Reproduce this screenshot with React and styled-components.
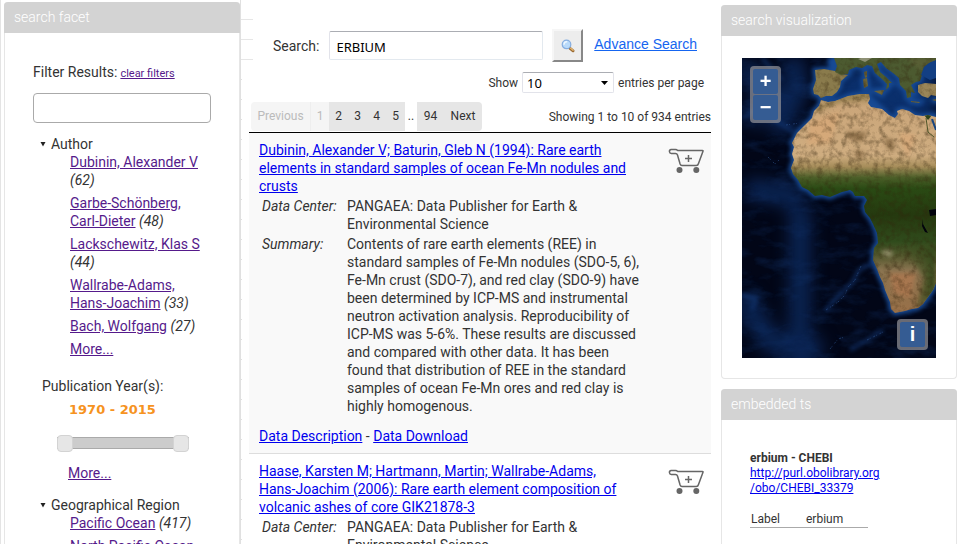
import React, { useState } from "react";
import styled, { createGlobalStyle } from "styled-components";

const GlobalStyle = createGlobalStyle`
  * { box-sizing: border-box; }
  body {
    margin: 0;
    background: #fff;
    color: #333;
    font: 14px/18px Roboto, "Liberation Sans", sans-serif;
  }
  button, input, select { font: inherit; color: inherit; margin: 0; }
`;

const Page = styled.div`
  display: grid;
  grid-template-columns: 236px minmax(0, 1fr) 236px;
  padding: 0 4px 0 3px;
  border-left: 1px solid #e4e4e4;
`;

const SideColumn = styled.aside`
  display: flex;
  flex-direction: column;
  gap: 10px;
  padding-top: ${(p) => p.$top}px;
`;

const PanelBox = styled.section`
  border: 1px solid #e6e6e6;
  border-top: 0;
  border-radius: 4px;
  background: #fff;
`;

const PanelHeader = styled.h2`
  margin: 0 -1px;
  height: 31px;
  padding: 0 10px;
  border-radius: 4px 4px 0 0;
  background: #d3d3d3;
  color: #fff;
  font-size: 14px;
  font-weight: 300;
  line-height: 30px;
`;

const FacetBody = styled.div`
  padding: 30px 28px 20px;
`;

const FilterLine = styled.div`
  display: flex;
  align-items: baseline;
  gap: 3px;
  margin-bottom: 10px;
`;

const Link = styled.a`
  color: ${(p) => (p.$visited ? "#551a8b" : "#0000ee")};
  font-size: ${(p) => p.$size || 14}px;
`;

const FilterInput = styled.input`
  display: block;
  width: 100%;
  height: 30px;
  padding: 0 8px;
  border: 1px solid #aaa;
  border-radius: 4px;
  background: #fff;
`;

const FacetGroup = styled.section`
  padding-left: 7px;
  margin-top: ${(p) => p.$gap}px;
`;

const FacetToggle = styled.button`
  display: flex;
  align-items: center;
  gap: 5px;
  padding: 0;
  border: 0;
  background: none;
`;

const FacetList = styled.ul`
  display: flex;
  flex-direction: column;
  gap: 5px;
  margin: 0;
  padding: 0 0 0 30px;
  list-style: none;
`;

const YearBlock = styled.section`
  padding-left: 9px;
  margin-top: 19px;
`;

const YearRange = styled.output`
  display: block;
  margin: 6px 0 15px 27px;
  color: #f6931f;
  font: bold 13px/18px "DejaVu Sans", sans-serif;
`;

const Slider = styled.div`
  display: grid;
  align-items: center;
  width: 132px;
  height: 18px;
  margin-left: 15px;
  background: linear-gradient(#aaa, #aaa) 0 3px / 100% 1px no-repeat,
    linear-gradient(#aaa, #aaa) 0 14px / 100% 1px no-repeat,
    linear-gradient(#ccc, #ccc) 0 3px / 100% 12px no-repeat;
`;

const Range = styled.input`
  grid-area: 1 / 1;
  appearance: none;
  width: 100%;
  height: 18px;
  background: none;
  pointer-events: none;
  &::-webkit-slider-thumb {
    appearance: none;
    width: 16px;
    height: 17px;
    border: 1px solid #d3d3d3;
    border-radius: 4px;
    background: #e6e6e6;
    pointer-events: auto;
  }
`;

const MoreYears = styled.div`
  margin: 12px 0 0 26px;
`;

const Main = styled.main`
  padding: 29px 10px 0 8px;
  border-left: 1px solid #e0e0e0;
  background: linear-gradient(#e6e6e6, #e6e6e6) 0 19px / 12px 1px no-repeat,
    linear-gradient(#e6e6e6, #e6e6e6) 0 39px / 12px 1px no-repeat,
    linear-gradient(#e6e6e6, #e6e6e6) 0 59px / 12px 1px no-repeat,
    repeating-linear-gradient(transparent 0 19px, #e0e0e0 19px 20px) 0 0 / 1px 100% no-repeat;
`;

const SearchForm = styled.form`
  display: flex;
  align-items: center;
  height: 33px;
  padding: 0 14px 0 24px;
`;

const SearchLabel = styled.label`
  padding-right: 10px;
`;

const SearchInput = styled.input`
  flex: 1;
  min-width: 0;
  height: 29px;
  padding: 2px 6px 0;
  border: 1px solid #e3e9ef;
  border-top-color: #abadb3;
  border-left-color: #e2e3ea;
  border-radius: 2px;
  color: #000;
  background: #fff;
  font: 13px "Noto Sans", sans-serif;
`;

const SearchButton = styled.button`
  display: grid;
  place-items: center;
  width: 31px;
  height: 33px;
  margin: 0 11px 0 9px;
  padding: 0;
  border: 2px solid;
  border-color: #f6f6f6 #888 #888 #f6f6f6;
  background: #ededed;
`;

const AdvanceLink = styled.a`
  padding-bottom: 4px;
  color: #1565f0;
  font: 14px/18px "Liberation Sans", sans-serif;
`;

const LengthRow = styled.div`
  display: flex;
  justify-content: flex-end;
  align-items: center;
  gap: 4px;
  padding: 0 7px 0 0;
  margin-top: 10px;
  height: 21px;
  font-size: 12px;
`;

const LengthSelect = styled.select`
  appearance: none;
  width: 92px;
  height: 21px;
  padding: 0 4px;
  border: 1px solid #e2e3ea;
  border-top-color: #abadb3;
  border-radius: 2px;
  color: #000;
  background: #fff url("data:image/svg+xml,%3Csvg xmlns='http://www.w3.org/2000/svg' width='7' height='4'%3E%3Cpath d='M0 0h7L3.500 4z'/%3E%3C/svg%3E") right 5px center no-repeat;
  font: 13px "Noto Sans", sans-serif;
`;

const PagerRow = styled.div`
  display: flex;
  justify-content: space-between;
  align-items: center;
  margin: 9px 0 1px;
  font-size: 12px;
`;

const Pager = styled.nav`
  display: flex;
  align-items: stretch;
  height: 29px;
  padding-left: 2px;
  line-height: 29px;
`;

const PageButton = styled.button`
  min-width: ${(p) => p.$width}px;
  padding: 0;
  border: 0;
  border-right: ${(p) => (p.$divider ? "1px solid #eee" : "0")};
  border-radius: ${(p) => p.$round || "0"};
  background: #e6e6e6;
  &:disabled {
    background: #f5f5f5;
    color: #bbb;
  }
`;

const PageGap = styled.span`
  width: 12px;
  text-align: center;
`;

const Results = styled.ol`
  margin: 0;
  padding: 0;
  border-top: 1px solid #000;
  list-style: none;
`;

const ResultRow = styled.li`
  display: grid;
  grid-template-columns: minmax(0, 1fr) 36px;
  gap: 24px;
  padding: 8px 7px 8px 10px;
  border-bottom: 1px solid #ddd;
  background: ${(p) => (p.$odd ? "#f9f9f9" : "#fff")};
`;

const ResultTitle = styled.h3`
  margin: 0 14px 2px 0;
  font-size: 14px;
  font-weight: 400;
`;

const Facts = styled.dl`
  display: grid;
  grid-template-columns: 82px minmax(0, 1fr);
  gap: 2px 3px;
  margin: 0 0 12px 3px;
`;

const FactLabel = styled.dt`
  font-style: italic;
`;

const FactValue = styled.dd`
  margin: 0;
`;

const CartButton = styled.button`
  align-self: start;
  width: 36px;
  height: 26px;
  margin-top: 7px;
  padding: 0;
  border: 0;
  background: none;
`;

const MapBody = styled.div`
  padding: 22px 20px 20px;
`;

const MapFrame = styled.div`
  position: relative;
  height: 300px;
`;

const MapSvg = styled.svg`
  display: block;
  width: 100%;
  height: 100%;
`;

const MapControl = styled.div`
  position: absolute;
  ${(p) => (p.$corner === "top" ? "top: 8px; left: 8px;" : "right: 8px; bottom: 8px;")}
  display: grid;
  gap: 1px;
  padding: 3px;
  border-radius: 4px;
  background: rgba(150, 150, 155, 0.7);
`;

const MapButton = styled.button`
  display: grid;
  place-items: center;
  width: 25px;
  height: 25px;
  padding: 0;
  border: 0;
  border-radius: 2px;
  background: #355c93;
  color: #fff;
  font: bold 20px/25px "Liberation Sans", sans-serif;
`;

const TermBody = styled.div`
  padding: 31px 28px;
  font-size: 12px;
  line-height: 15px;
`;

const TermName = styled.strong`
  display: block;
`;

const TermTable = styled.table`
  width: 118px;
  margin-top: 15px;
  border-collapse: collapse;
  th, td {
    padding: 1px 1px 0;
    border-bottom: 1px solid #aaa;
    font-weight: 400;
    text-align: left;
  }
  th { width: 55px; }
`;

function Panel({ title, children }) {
  return (
    <PanelBox>
      <PanelHeader>{title}</PanelHeader>
      {children}
    </PanelBox>
  );
}

function Facet({ name, items, gap, more }) {
  const [open, setOpen] = useState(true);
  return (
    <FacetGroup $gap={gap}>
      <FacetToggle type="button" aria-expanded={open} onClick={() => setOpen(!open)}>
        <svg width="6" height="6" viewBox="0 0 6 6" aria-hidden="true">
          <path d="M.5 1h5L3 5.500z" fill="#222" />
        </svg>
        {name}
      </FacetToggle>
      {open && (
        <FacetList>
          {items.map(([label, count]) => (
            <li key={label}>
              <Link href="#" $visited>{label}</Link> <i>({count})</i>
            </li>
          ))}
          {more && <li><Link href="#" $visited>More...</Link></li>}
        </FacetList>
      )}
    </FacetGroup>
  );
}

function YearSlider() {
  const [from, setFrom] = useState(1970);
  const [to, setTo] = useState(2015);
  return (
    <YearBlock>
      <div>Publication Year(s):</div>
      <YearRange>{from} - {to}</YearRange>
      <Slider>
        <Range type="range" aria-label="From year" min="1970" max="2015" value={from}
          onChange={(e) => setFrom(Math.min(+e.target.value, to))} />
        <Range type="range" aria-label="To year" min="1970" max="2015" value={to}
          onChange={(e) => setTo(Math.max(+e.target.value, from))} />
      </Slider>
      <MoreYears><Link href="#" $visited>More...</Link></MoreYears>
    </YearBlock>
  );
}

function CartIcon() {
  return (
    <svg width="36" height="26" viewBox="0 0 36 26" fill="none" stroke="#666" strokeWidth="1.500" strokeLinejoin="round" aria-hidden="true">
      <path d="M7.500 5.500H3.700A2 2 0 0 1 3.200 1.500h4.300Q9 1.500 9.500 2.500h25q.8 0 .5.800L30.500 15.500Q30 17.500 28.300 17.500H14q-1.400 0-1.900-1.500L9.500 7Q9 5.500 7.500 5.500z" />
      <path d="M20.500 7v7M17 10.500h7" />
      <circle cx="11.500" cy="22" r="3" fill="#666" stroke="none" />
      <circle cx="28.300" cy="22" r="3" fill="#666" stroke="none" />
    </svg>
  );
}

function LensIcon() {
  return (
    <svg width="14" height="14" viewBox="0 0 16 16" aria-hidden="true">
      <path d="M10 10.500l3.800 3" stroke="#9a6a32" strokeWidth="3.200" strokeLinecap="round" />
      <path d="M11 10.500l2.800 2.400" stroke="#e6b870" strokeWidth="1.500" strokeLinecap="round" />
      <circle cx="6.300" cy="6.200" r="4.900" fill="#b9dafa" stroke="#86aee0" strokeWidth="1.400" />
      <path d="M3.500 6a3 3 0 0 1 3-2.800" stroke="#eef7ff" strokeWidth="1.600" fill="none" strokeLinecap="round" />
    </svg>
  );
}

const africa = "M79 42L86 44 93 43 106 38 118 36 127 36 128 41 126 45 129 49 140 51 147 57 153 60 156 56 155 53 160 51 167 53 173 57 181 58 186 57 194 59V225L191 232 186 239 181 246 176 250 170 251 163 253 153 255 149 251 148 244 143 232 141 225 138 219 135 211 131 202 132 190 136 185 135 175 131 166 128 160 123 154 122 148 125 142 122 138 113 138 111 134 108 132 100 134 88 139 80 137 73 138 66 132 60 129 56 122 51 116 49 110 52 102 50 96 52 89 50 85 55 75 63 67 70 60 72 53 77 48z";
const iberia = "M73 12L82 11 93 13 99 16 106 17 99 23 98 29 95 34 90 38 84 38 79 40 76 37 72 36 71 31 74 22z";
const europe = "M92 0L95 8 93 14 99 17 106 16 107 12 114 9 120 10 125 7 130 8 133 15 140 21 145 26 144 32 140 35 147 29 147 25 150 25 144 19 138 14 135 6 139 4 144 10 151 15 157 20 158 27 164 33 165 40 169 39 169 34 173 35 169 27 174 24 178 23 181 14 182 9 187 5 194 2V0z";
const islands = "M122 14l3-1 0 6-2 1zM121 21l4-1 1 8-4 2zM132 33l10-1-2 5zM169 43l9 1-1 1-8-1zM190 42l4-1v2z";
const turkey = "M176 27L183 25 194 26V38L189 37 186 40 180 38 176 34z";

function SatelliteMap() {
  return (
    <MapSvg viewBox="0 0 194 300" preserveAspectRatio="xMidYMid slice" role="img" aria-label="Satellite map of Africa and the Atlantic">
      <defs>
        <linearGradient id="land" x1="0" y1="36" x2="0" y2="256" gradientUnits="userSpaceOnUse">
          <stop offset="0" stopColor="#a88c5c" />
          <stop offset=".06" stopColor="#cba67a" />
          <stop offset=".28" stopColor="#cfad80" />
          <stop offset=".33" stopColor="#a68d5a" />
          <stop offset=".38" stopColor="#4b5e28" />
          <stop offset=".43" stopColor="#2a4a14" />
          <stop offset=".55" stopColor="#25390f" />
          <stop offset=".67" stopColor="#304b1c" />
          <stop offset=".74" stopColor="#56592f" />
          <stop offset=".8" stopColor="#8a7450" />
          <stop offset="1" stopColor="#9a7048" />
        </linearGradient>
        <linearGradient id="east"><stop offset="0" stopColor="#34491b" stopOpacity="0" /><stop offset="1" stopColor="#34491b" /></linearGradient>
        <filter id="soft" x="-50%" y="-50%" width="200%" height="200%" colorInterpolationFilters="sRGB"><feGaussianBlur stdDeviation="8" /></filter>
        <filter id="near" x="-20%" y="-20%" width="140%" height="140%" colorInterpolationFilters="sRGB"><feGaussianBlur stdDeviation="2" /></filter>
        <filter id="oceanGrain" x="0" y="0" width="100%" height="100%" colorInterpolationFilters="sRGB">
          <feTurbulence type="fractalNoise" baseFrequency=".04 .09" numOctaves="5" seed="21" />
          <feColorMatrix values="0 0 0 0 .08  0 0 0 0 .22  0 0 0 0 .45  2 0 0 0 -.9" />
        </filter>
        <filter id="landGrain" x="0" y="0" width="100%" height="100%" colorInterpolationFilters="sRGB">
          <feTurbulence type="fractalNoise" baseFrequency=".16" numOctaves="4" seed="3" />
          <feColorMatrix values="0 0 0 0 .2  0 0 0 0 .14  0 0 0 0 .05  1.400 0 0 0 -.6" />
        </filter>
        <clipPath id="landClip"><path d={africa + iberia + europe + turkey + islands} /></clipPath>
      </defs>
      <rect width="194" height="300" fill="#020617" />
      <g filter="url(#soft)" fill="none">
        <path d="M0 8L32 40 5 62M50 0L55 30 35 75M5 130L60 140M58 150V320M0 240L30 285 80 292" stroke="#0d2d66" strokeWidth="22" opacity=".75" />
        <path d="M100 10H194V60H85z" fill="#0d3a82" opacity=".8" />
      </g>
      <g filter="url(#near)" fill="none" stroke="#153c7c" strokeWidth="4" opacity=".6">
        <path d="M132 204L117 212 110 225 96 238 84 252M108 292L125 282 141 272M0 238l14 2-4 12M20 0L40 22M30 60l22 14M0 60L20 50" />
      </g>
      <rect width="194" height="300" filter="url(#oceanGrain)" opacity=".4" />
      <g filter="url(#near)" fill="#174a94" stroke="#174a94" strokeWidth="5">
        <path d={africa} /><path d={iberia} /><path d={europe} /><path d={islands} />
        <path d="M128 42L150 62 194 58M88 0L92 12" fill="none" strokeWidth="8" />
      </g>
      <g fill="none" stroke="#3a66a8" strokeWidth="1" strokeDasharray="2 1 1 3" opacity=".45">
        <path d="M119 208L113 222 106 229 103 237 96 244 84 252" />
        <path d="M88 291L96 281 103 279M125 282L141 274M44 67L58 65M26 99l7 7 4-4M90 56l10-9" />
      </g>
      <path d={africa} fill="url(#land)" />
      <path d={iberia} fill="#8a7b4c" /><path d={europe} fill="#4c5a30" /><path d={turkey} fill="#9a8558" /><path d={islands} fill="#6b6338" />
      <g clipPath="url(#landClip)">
        <g filter="url(#near)">
          <path d="M70 50L100 39 127 35V41L100 43 76 54z" fill="#796b38" opacity=".5" />
          <path d="M103 74h22l-5 10-12-3zM142 80l10 2v12l-7-4zM112 92l11 2-6 10z" fill="#795d3a" opacity=".75" />
          <path d="M68 64L98 53 88 85 65 87zM157 75L174 77 165 101z" fill="#d9a878" opacity=".7" />
          <path d="M160 188H194V238L174 250 182 220z" fill="url(#east)" />
          <path d="M147 215L174 215 168 240 152 235z" fill="#b07850" opacity=".75" />
          <path d="M140 192h10v7l-9-2z" fill="#c0b294" opacity=".6" />
          <path d="M165 0H194V7L178 12z" fill="#66643a" opacity=".5" />
        </g>
        <rect width="194" height="300" filter="url(#landGrain)" opacity=".7" />
        <path d="M194 151l-7 1 1 6 6-1zM181 161v5l5 9-3-1-3-6z" fill="#02030c" />
        <path d="M184 60L186 74 192 79" stroke="#4f5529" fill="none" />
        <path d="M190 61l4 11" stroke="#174681" strokeWidth="2" />
        <path d="M182 57h8l-4 5z" fill="#2e431a" />
        <path d="M116 1l6-2 8 1-7 4z" fill="#bbb6a3" opacity=".6" />
      </g>
      <path d="M179 17L182 9 189 4 194 3V20L188 22z" fill="#133f83" />
    </MapSvg>
  );
}

const authors = [
  ["Dubinin, Alexander V", 62],
  ["Garbe-Schönberg, Carl-Dieter", 48],
  ["Lackschewitz, Klas S", 44],
  ["Wallrabe-Adams, Hans-Joachim", 33],
  ["Bach, Wolfgang", 27],
];
const regions = [["Pacific Ocean", 417], ["North Pacific Ocean", 126]];

const results = [
  {
    title: "Dubinin, Alexander V; Baturin, Gleb N (1994): Rare earth elements in standard samples of ocean Fe-Mn nodules and crusts",
    center: "PANGAEA: Data Publisher for Earth & Environmental Science",
    summary: "Contents of rare earth elements (REE) in standard samples of Fe-Mn nodules (SDO-5, 6), Fe-Mn crust (SDO-7), and red clay (SDO-9) have been determined by ICP-MS and instrumental neutron activation analysis. Reproducibility of ICP-MS was 5-6%. These results are discussed and compared with other data. It has been found that distribution of REE in the standard samples of ocean Fe-Mn ores and red clay is highly homogenous.",
  },
  {
    title: "Haase, Karsten M; Hartmann, Martin; Wallrabe-Adams, Hans-Joachim (2006): Rare earth element composition of volcanic ashes of core GIK21878-3",
    center: "PANGAEA: Data Publisher for Earth & Environmental Science",
  },
];

function Result({ item, odd }) {
  return (
    <ResultRow $odd={odd}>
      <div>
        <ResultTitle><Link href="#">{item.title}</Link></ResultTitle>
        <Facts>
          <FactLabel>Data Center:</FactLabel>
          <FactValue>{item.center}</FactValue>
          {item.summary && (
            <>
              <FactLabel>Summary:</FactLabel>
              <FactValue>{item.summary}</FactValue>
            </>
          )}
        </Facts>
        <Link href="#">Data Description</Link> - <Link href="#">Data Download</Link>
      </div>
      <CartButton type="button" aria-label="Add to cart"><CartIcon /></CartButton>
    </ResultRow>
  );
}

export default function App() {
  return (
    <>
      <GlobalStyle />
      <Page>
        <SideColumn $top={2}>
          <Panel title="search facet">
            <FacetBody>
              <FilterLine>
                <label htmlFor="filter">Filter Results:</label>
                <Link href="#" $visited $size={11}>clear filters</Link>
              </FilterLine>
              <FilterInput id="filter" type="text" />
              <Facet name="Author" items={authors} gap={12} more />
              <YearSlider />
              <Facet name="Geographical Region" items={regions} gap={14} more />
            </FacetBody>
          </Panel>
        </SideColumn>
        <Main>
          <SearchForm onSubmit={(e) => e.preventDefault()}>
            <SearchLabel htmlFor="query">Search:</SearchLabel>
            <SearchInput id="query" type="text" defaultValue="ERBIUM" />
            <SearchButton type="submit" aria-label="Search"><LensIcon /></SearchButton>
            <AdvanceLink href="#">Advance Search</AdvanceLink>
          </SearchForm>
          <LengthRow>
            <label htmlFor="length">Show</label>
            <LengthSelect id="length" defaultValue="10">
              <option>10</option>
              <option>25</option>
              <option>50</option>
            </LengthSelect>
            <span>entries per page</span>
          </LengthRow>
          <PagerRow>
            <Pager aria-label="Pages">
              <PageButton type="button" disabled $width={60} $divider $round="4px 0 0 4px">Previous</PageButton>
              <PageButton type="button" disabled $width={18}>1</PageButton>
              {[2, 3, 4, 5].map((n) => <PageButton type="button" key={n} $width={19}>{n}</PageButton>)}
              <PageGap>..</PageGap>
              <PageButton type="button" $width={27}>94</PageButton>
              <PageButton type="button" $width={38} $round="0 4px 4px 0">Next</PageButton>
            </Pager>
            <span>Showing 1 to 10 of 934 entries</span>
          </PagerRow>
          <Results>
            {results.map((item, i) => <Result key={item.title} item={item} odd={i % 2 === 0} />)}
          </Results>
        </Main>
        <SideColumn $top={5}>
          <Panel title="search visualization">
            <MapBody>
              <MapFrame>
                <SatelliteMap />
                <MapControl $corner="top">
                  <MapButton type="button" aria-label="Zoom in">+</MapButton>
                  <MapButton type="button" aria-label="Zoom out">−</MapButton>
                </MapControl>
                <MapControl>
                  <MapButton type="button" aria-label="Attributions">i</MapButton>
                </MapControl>
              </MapFrame>
            </MapBody>
          </Panel>
          <Panel title="embedded ts">
            <TermBody>
              <TermName>erbium - CHEBI</TermName>
              <Link href="#" $size={12}>http://purl.obolibrary.org<wbr />/obo/CHEBI_33379</Link>
              <TermTable>
                <tbody>
                  <tr><th scope="row">Label</th><td>erbium</td></tr>
                </tbody>
              </TermTable>
            </TermBody>
          </Panel>
        </SideColumn>
      </Page>
    </>
  );
}
